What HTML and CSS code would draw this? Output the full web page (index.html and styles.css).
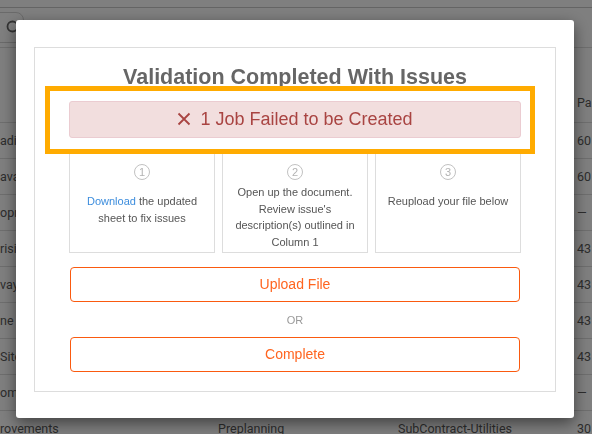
FILE: index.html
```html
<!DOCTYPE html>
<html lang="en">
<head>
  <meta charset="UTF-8">
  <meta name="viewport" content="width=device-width, initial-scale=1">
  <title>Validation Completed With Issues</title>
  <link rel="stylesheet" href="styles.css">
</head>
<body>
  <div class="page">
    <div class="topbar">
      <div class="search">
        <svg class="search-icon" width="18" height="18" viewBox="0 0 18 18">
          <circle cx="7.5" cy="7.5" r="5" fill="none" stroke="#666" stroke-width="1.8"/>
          <line x1="11.2" y1="11.2" x2="16" y2="16" stroke="#666" stroke-width="1.8"/>
        </svg>
      </div>
    </div>

    <table class="jobs">
      <thead>
        <tr><th class="c1"></th><th class="c2"></th><th class="c3"></th><th class="c4">Pa</th></tr>
      </thead>
      <tbody>
        <tr><td>ading</td><td></td><td></td><td>60</td></tr>
        <tr><td>avation</td><td></td><td></td><td>60</td></tr>
        <tr><td>opriations</td><td></td><td></td><td>—</td></tr>
        <tr><td>rision</td><td></td><td></td><td>43</td></tr>
        <tr><td>vay</td><td></td><td></td><td>43</td></tr>
        <tr><td>ne Cleaning</td><td></td><td></td><td>43</td></tr>
        <tr><td>Site Prep</td><td></td><td></td><td>43</td></tr>
        <tr><td>omeowner</td><td></td><td></td><td>—</td></tr>
        <tr><td>rovements</td><td>Preplanning</td><td>SubContract-Utilities</td><td>30</td></tr>
      </tbody>
    </table>
  </div>

  <div class="backdrop"></div>

  <!-- validation result modal -->
  <div class="modal">
    <div class="panel">
      <h2 class="title">Validation Completed With Issues</h2>
      <div class="alert">
        <svg class="alert-x" width="14" height="14" viewBox="0 0 14 14">
          <path d="M1.5 1.5 L12.5 12.5 M12.5 1.5 L1.5 12.5" stroke="#a94442" stroke-width="1.8" fill="none"/>
        </svg>
        1 Job Failed to be Created
      </div>

      <div class="steps">
        <div class="step">
          <span class="num">1</span>
          <p class="step-text"><a href="#" class="link">Download</a> the updated sheet to fix issues</p>
        </div>
        <div class="step">
          <span class="num">2</span>
          <p class="step-text tight">Open up the document. Review issue's description(s) outlined in Column 1</p>
        </div>
        <div class="step">
          <span class="num">3</span>
          <p class="step-text">Reupload your file below</p>
        </div>
      </div>

      <button class="btn">Upload File</button>
      <div class="or">OR</div>
      <button class="btn">Complete</button>
    </div>
    <div class="highlight"></div>
  </div>
</body>
</html>
```

FILE: styles.css
```css
body {
  margin: 0;
  background: #fff;
  font-family: "Liberation Sans", Arial, sans-serif;
  overflow: hidden;
  height: 434px;
}
.page {
  font-family: Roboto, "Liberation Sans", sans-serif;
  color: #5a5a5a;
}
.topbar {
  margin-top: 7px;
  height: 41px;
  border-top: 1px solid #c8c8c8;
  border-bottom: 1px solid #ddd;
  padding-top: 4px;
  box-sizing: border-box;
}
.search {
  width: 204px;
  height: 31px;
  margin-left: -180px;
  border: 1px solid #d4d4d4;
  border-radius: 8px;
  box-sizing: border-box;
  display: flex;
  align-items: center;
  padding-left: 184px;
}
.jobs {
  width: 700px;
  table-layout: fixed;
  border-collapse: collapse;
  font-size: 12.5px;
}
.jobs th {
  height: 62px;
  text-align: left;
  vertical-align: bottom;
  padding: 0 0 12px;
  font-weight: normal;
}
.jobs .c1 { width: 218px; }
.jobs .c2 { width: 180px; }
.jobs .c3 { width: 179px; }
.jobs td {
  height: 36px;
  padding: 0;
  border-top: 1px solid #ddd;
  white-space: nowrap;
  overflow: hidden;
  box-sizing: border-box;
}
.backdrop {
  position: fixed;
  inset: 0;
  background: rgba(0,0,0,0.5);
}
.modal {
  position: fixed;
  top: 20px;
  left: 16px;
  width: 558px;
  box-sizing: border-box;
  padding: 27px 18px 26px;
  background: #fff;
  border-radius: 3px;
  box-shadow: 0 5px 15px rgba(0,0,0,0.5);
}
.panel {
  border: 1px solid #ddd;
  padding: 18px 34px 19px;
}
.title {
  margin: 0;
  font-size: 21.5px;
  line-height: 23px;
  color: #666;
  text-align: center;
}
.alert {
  position: relative;
  z-index: 2;
  margin-top: 12px;
  padding: 7px;
  background: #f2dede;
  border: 1px solid #ebccd1;
  border-radius: 3px;
  color: #a94442;
  font-size: 18px;
  line-height: 21px;
  text-align: center;
}
.alert-x {
  vertical-align: -1px;
  margin-right: 4px;
}
.highlight {
  position: absolute;
  z-index: 1;
  left: 29px;
  top: 66px;
  width: 490px;
  height: 68px;
  box-sizing: border-box;
  border: 5px solid #ffab00;
  background: #fff;
}
.steps {
  display: grid;
  grid-template-columns: repeat(3, 1fr);
  gap: 7px;
  margin-top: 7px;
}
.step {
  height: 108px;
  box-sizing: border-box;
  border: 1px solid #ddd;
  padding: 18px 6px 0;
  text-align: center;
}
.num {
  display: inline-flex;
  align-items: center;
  justify-content: center;
  width: 16px;
  height: 16px;
  box-sizing: border-box;
  border: 1.5px solid #c2c2c2;
  border-radius: 50%;
  font-size: 11px;
  color: #b3b3b3;
  vertical-align: top;
}
.step-text {
  margin: 11px 0 0;
  font-size: 11px;
  line-height: 16.5px;
  color: #555;
}
.step-text.tight {
  margin-top: 2px;
}
.link {
  color: #3c8ddd;
  text-decoration: none;
}
.btn {
  display: block;
  width: calc(100% - 2px);
  margin: 14px 1px 0;
  padding: 8px;
  background: #fff;
  border: 1px solid #fa5a0f;
  border-radius: 4px;
  color: #ff6520;
  font-family: "Liberation Sans", Arial, sans-serif;
  font-size: 14px;
  line-height: 17px;
  cursor: pointer;
}
.or {
  height: 35px;
  line-height: 37px;
  font-size: 11px;
  color: #999;
  text-align: center;
}
.or + .btn {
  margin-top: 0;
}
```
